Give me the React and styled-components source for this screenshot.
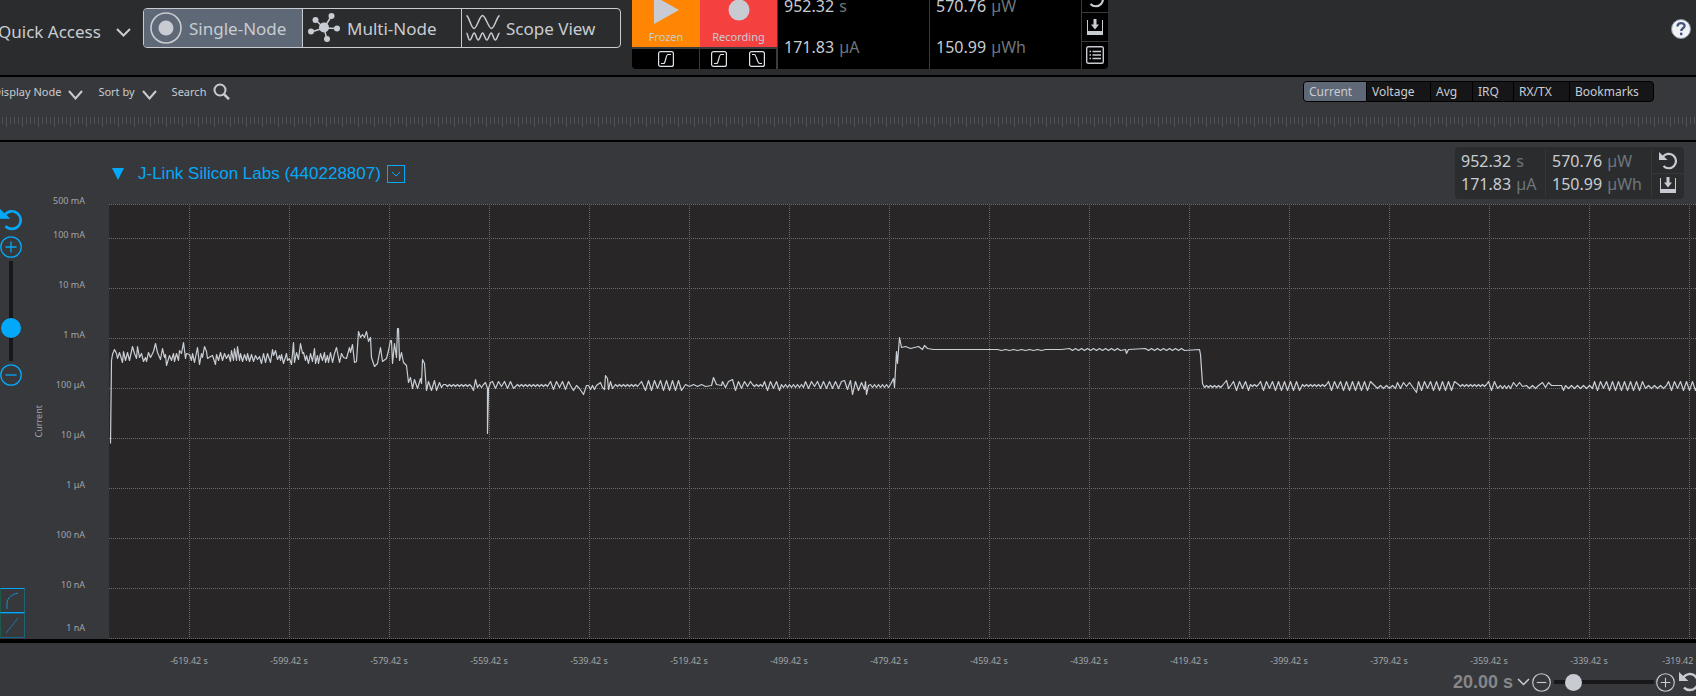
import React, { useState } from "react";
import styled, { createGlobalStyle, css } from "styled-components";

const c = {
  header: "#2b2c2e",
  panel: "#37383c",
  plot: "#282627",
  light: "#c8ccd2",
  dim: "#6d767c",
  axis: "#a2a5a8",
  grid: "#6c6c6c",
  cyan: "#03a9f8",
  active: "#5e6876",
};

const GlobalStyle = createGlobalStyle`
  *, *::before, *::after { box-sizing: border-box; }
  body {
    margin: 0;
    background: ${c.panel};
    color: ${c.light};
    font-family: "Noto Sans", "Open Sans", sans-serif;
    overflow: hidden;
  }
  button {
    margin: 0;
    padding: 0;
    border: 0;
    background: none;
    color: inherit;
    font: inherit;
    cursor: pointer;
  }
  svg { display: block; flex: none; }
`;

const Page = styled.div`
  display: flex;
  flex-direction: column;
  min-height: 100vh;
`;

/* ---------- header ---------- */
const Header = styled.header`
  display: flex;
  align-items: flex-start;
  height: 77px;
  background: ${c.header};
  border-bottom: 2px solid #000;
`;

const QuickAccess = styled.button`
  display: flex;
  align-items: center;
  justify-content: space-between;
  flex: none;
  width: 133px;
  height: 24px;
  margin: 20px 12px 0 -2px;
  font-size: 17px;
  line-height: 24px;
  white-space: nowrap;
`;

const ModeGroup = styled.nav`
  display: flex;
  flex: none;
  margin-top: 8px;
  height: 40px;
  border: 1px solid ${c.light};
  border-radius: 4px;
  overflow: hidden;
`;

const ModeButton = styled.button`
  display: flex;
  align-items: center;
  gap: 6px;
  width: 159px;
  padding-left: 5px;
  font-size: 17px;
  background: ${(p) => (p.$active ? c.active : "transparent")};
  &:first-child { width: 158px; }
  & + & {
    padding-left: 4px;
    border-left: 1px solid ${c.light};
  }
`;

const Meter = styled.section`
  display: flex;
  flex: none;
  height: 84px;
  margin: -15px 0 0 11px;
  background: #000;
  border-radius: 4px;
  overflow: hidden;
`;

const Recorder = styled.div`
  display: flex;
  flex-direction: column;
  width: ${(p) => p.$width}px;
`;

const RecordButton = styled.button`
  display: flex;
  flex-direction: column;
  align-items: center;
  justify-content: flex-end;
  gap: 6px;
  height: 62px;
  padding-bottom: 3px;
  background: ${(p) => p.$color};
  font-size: 11px;
  line-height: 14px;
`;

const Triggers = styled.div`
  display: flex;
  align-items: center;
  justify-content: center;
  gap: 22px;
  height: 22px;
  border-top: 2px solid #3a3b3d;
  border-right: 1px solid #3a3b3d;
`;

const Readings = styled.div`
  width: ${(p) => p.$width}px;
  padding: ${(p) => p.$pad};
  border-left: 1px solid ${(p) => p.$line};
  font-size: 16px;
  white-space: nowrap;
`;

const Reading = styled.div`
  height: ${(p) => p.$height}px;
  line-height: ${(p) => p.$height}px;
  span {
    margin-left: 1px;
    color: ${c.dim};
  }
`;

const ToolColumn = styled.div`
  display: flex;
  flex-direction: column;
  width: ${(p) => p.$width}px;
  border-left: 1px solid ${(p) => p.$line};
  button {
    display: flex;
    align-items: center;
    justify-content: center;
    flex: 1;
  }
  button + button { border-top: 1px solid ${(p) => p.$line}; }
`;

const HelpButton = styled.button`
  margin: 19px 5px 0 auto;
`;

/* ---------- toolbar ---------- */
const Toolbar = styled.section`
  height: 65px;
  border-bottom: 2px solid #000;
`;

const ToolbarRow = styled.div`
  display: flex;
  align-items: center;
  justify-content: space-between;
  height: 29px;
  padding-right: 42px;
`;

const Filters = styled.div`
  display: flex;
  gap: 15px;
  margin-left: -7px;
`;

const FilterButton = styled.button`
  display: flex;
  align-items: center;
  gap: 7px;
  font-size: 11px;
  line-height: 16px;
  white-space: nowrap;
  svg { margin-top: ${(p) => p.$drop || 0}px; }
`;

const Tabs = styled.div`
  display: flex;
  height: 21px;
  border: 1px solid #000;
  border-radius: 4px;
  overflow: hidden;
  background: #161618;
`;

const Tab = styled.button`
  width: ${(p) => p.$width}px;
  padding-left: 5px;
  text-align: left;
  font-size: 12px;
  line-height: 18px;
  white-space: nowrap;
  background: ${(p) => (p.$active ? c.active : "transparent")};
  & + & { border-left: 1px solid #000; }
`;

const Ruler = styled.div`
  height: 10px;
  margin-top: 11px;
  background:
    repeating-linear-gradient(90deg, transparent 0 6px, #4f5054 6px 7px, transparent 7px 16px) 0 0 / 100% 10px no-repeat,
    repeating-linear-gradient(90deg, transparent 0 2px, #4f5054 2px 3px, transparent 3px 4px) 0 0 / 100% 7px no-repeat;
`;

/* ---------- node panel ---------- */
const NodeHeader = styled.div`
  display: flex;
  align-items: flex-start;
  justify-content: space-between;
  height: 62px;
  padding: 5px 12px 0 112px;
`;

const NodeTitle = styled.div`
  display: flex;
  align-items: center;
  height: 54px;
  gap: 14px;
  color: ${c.cyan};
  h1 {
    margin: 0;
    font: 17px/20px "Liberation Sans", Arial, sans-serif;
    white-space: nowrap;
  }
  button { margin-left: -8px; }
`;

const NodeMeter = styled.section`
  display: flex;
  height: 52px;
  padding: 3px 0;
  background: ${c.header};
  border-radius: 4px;
  ${Readings}:first-child { border-left: 0; }
`;

const Chart = styled.main`
  display: flex;
  border-bottom: 4px solid #000;
  height: 439px;
`;

const Rail = styled.div`
  display: flex;
  flex-direction: column;
  align-items: flex-start;
  flex: none;
  width: 25px;
  padding-top: 5px;
  color: ${c.cyan};
`;

const RailButton = styled.button`
  margin: ${(p) => p.$margin};
`;

const ScaleButton = styled.button`
  display: flex;
  align-items: center;
  justify-content: center;
  width: 25px;
  height: 25px;
  border: 1px solid ${(p) => (p.$active ? c.cyan : "#14668f")};
  border-left-color: #1c5a4c;
  border-right-color: #1b6472;
  color: ${(p) => (p.$active ? "#1191d0" : "#1f75a2")};
`;

const ScaleGroup = styled.div`
  margin: auto 0 1px;
  display: flex;
  flex-direction: column;
`;

const thumb = css`
  -webkit-appearance: none;
  border: 0;
  border-radius: 50%;
  width: ${(p) => p.$thumb}px;
  height: ${(p) => p.$thumb}px;
  background: ${(p) => p.$color};
`;

const Slider = styled.input.attrs({ type: "range" })`
  -webkit-appearance: none;
  appearance: none;
  margin: 0;
  background: transparent;
  ${(p) =>
    p.$vertical
      ? css`
          writing-mode: vertical-lr;
          direction: rtl;
          width: 20px;
          height: 100px;
          margin: 2px 0 2px 1px;
        `
      : css`
          width: 100px;
          height: 20px;
          margin: 0 2px 0 3px;
        `}
  &::-webkit-slider-runnable-track {
    background: linear-gradient(#18181a, #18181a) center / ${(p) => (p.$vertical ? "4px 100%" : "100% 4px")} no-repeat;
  }
  &::-webkit-slider-thumb { ${thumb} }
`;

const AxisTitle = styled.div`
  display: flex;
  align-items: center;
  justify-content: center;
  flex: none;
  width: 28px;
  color: ${c.axis};
  font-size: 9px;
  line-height: 12px;
  span {
    writing-mode: vertical-rl;
    rotate: 180deg;
  }
`;

const AxisLabels = styled.div`
  flex: none;
  width: 56px;
  margin-top: -9px;
  padding-right: 24px;
  color: ${c.axis};
  font-size: 9px;
  line-height: 12px;
  text-align: right;
  white-space: nowrap;
`;

const AxisLabel = styled.div`
  height: ${(p) => p.$span}px;
`;

const Plot = styled.div`
  flex: 1;
  min-width: 0;
  background: ${c.plot};
  overflow: hidden;
`;

const TimeAxis = styled.div`
  display: flex;
  height: 28px;
  padding: 12px 0 0 139px;
  color: ${c.axis};
  font-size: 9px;
  line-height: 12px;
  overflow: hidden;
`;

const TimeLabel = styled.div`
  flex: none;
  width: 100px;
  text-align: center;
  &:last-child { width: 61px; text-align: right; }
`;

const ZoomBar = styled.footer`
  display: flex;
  align-items: center;
  justify-content: flex-end;
  height: 22px;
  margin-right: -3px;
`;

const Duration = styled.button`
  display: flex;
  align-items: center;
  gap: 4px;
  margin-right: 2px;
  color: #85878a;
  font: bold 18px/20px "Liberation Sans", Arial, sans-serif;
  svg { color: ${c.light}; }
`;

/* ---------- icons ---------- */
const Chevron = ({ w = 14, h = 9, stroke = 2 }) => (
  <svg width={w} height={h} viewBox={`0 0 ${w} ${h}`} fill="none" stroke="currentColor" strokeWidth={stroke}>
    <path d={`M1 1L${w / 2} ${h - 1.5}L${w - 1} 1`} />
  </svg>
);

const SingleIcon = () => (
  <svg width="34" height="34" viewBox="0 0 34 34" fill="none" stroke="currentColor" strokeWidth="1.6">
    <circle cx="17" cy="17" r="15" />
    <circle cx="17" cy="17" r="7.5" fill="currentColor" stroke="none" />
  </svg>
);

const MultiIcon = () => (
  <svg width="34" height="34" viewBox="0 0 34 34" fill="currentColor" stroke="currentColor" strokeWidth="1.5">
    <path d="M17 17L24.500 5M17 17L8.500 9M17 17L4 21M17 17L30 17.500M17 17L20 28.500" />
    <g stroke="none">
      <circle cx="17" cy="16.500" r="5" />
      <circle cx="24.500" cy="5" r="3" />
      <circle cx="8.500" cy="9" r="3" />
      <circle cx="4" cy="20.500" r="3" />
      <circle cx="30" cy="17.500" r="3" />
      <circle cx="20" cy="28" r="3" />
    </g>
  </svg>
);

const WavesIcon = () => (
  <svg width="34" height="34" viewBox="0 0 34 34" fill="none" stroke="currentColor" strokeWidth="1.500">
    <path d="M0.500 4.500C3.500 6 5 17.500 8 17.500S13.500 4.500 16.500 4.500S22.500 17.500 25.500 17.500S30.500 6 33.500 4.500" />
    <path d="M0.500 22C2 22.500 2 29 3.800 29S6.500 22 8.200 22S10.500 29 12.300 29S15 22 16.600 22S19 29 20.800 29S23.500 22 25.200 22S27.500 29 29.300 29S32 22.500 33.500 22" />
  </svg>
);

const PlayIcon = () => (
  <svg width="25" height="28" viewBox="0 0 25 28" fill={c.light}>
    <path d="M0 0L25 14L0 28Z" />
  </svg>
);

const RecordIcon = () => (
  <svg width="28" height="28" viewBox="0 0 28 28" fill={c.light}>
    <circle cx="14" cy="14" r="10.500" />
  </svg>
);

const EdgeIcon = ({ falling }) => (
  <svg width="16" height="16" viewBox="0 0 16 16" fill="none" stroke="#dfe3e8" strokeWidth="1.200">
    <rect x="0.600" y="0.600" width="14.800" height="14.800" rx="2" />
    <path d={falling ? "M3 3.500H5.500C7 3.500 8.500 12.500 10.500 12.500H13" : "M3 12.500H5.500C8 12.500 7.500 3.500 10 3.500H13"} />
  </svg>
);

const ResetIcon = ({ size = 18 }) => (
  <svg width={size} height={size} viewBox="0 0 18 18" fill="none" stroke="currentColor" strokeWidth="2.200">
    <path d="M3.800 5A7.200 7.200 0 1 1 4.500 14" />
    <path d="M0 0V8H8.500Z" fill="currentColor" stroke="none" />
  </svg>
);

const SaveIcon = () => (
  <svg width="18" height="16" viewBox="0 0 18 16" fill="currentColor">
    <path d="M1 1h1v11h14V1H17v15H1z" />
    <path d="M7.500 0h3v5.500h2.500L9 10.500L5 5.500h2.500z" />
  </svg>
);

const ListIcon = () => (
  <svg width="18" height="18" viewBox="0 0 18 18" fill="none" stroke="currentColor" strokeWidth="1.400">
    <rect x="0.700" y="0.700" width="16.600" height="16.600" rx="1.500" />
    <path d="M3.500 5.500H5M6.500 5.500H15M3.500 9H5M6.500 9H15M3.500 12.500H5M6.500 12.500H15" />
  </svg>
);

const SearchIcon = () => (
  <svg width="17" height="17" viewBox="0 0 17 17" fill="none" stroke="currentColor" strokeWidth="2">
    <circle cx="7" cy="7" r="5.500" />
    <path d="M10.800 11L16 16.200" strokeWidth="2.500" />
  </svg>
);

const HelpIcon = () => (
  <svg width="20" height="20" viewBox="0 0 20 20">
    <circle cx="10" cy="10" r="9.500" fill="#f1f2f4" stroke="#8a93a5" />
    <path d="M6.500 7.500C6.500 3 13.800 3.200 13.600 7C13.500 9.200 10.200 9.400 10.200 12" fill="none" stroke="#43537a" strokeWidth="2.300" />
    <circle cx="10.200" cy="15" r="1.400" fill="#43537a" />
  </svg>
);

const ZoomIcon = ({ size, plus }) => (
  <svg width={size} height={size} viewBox="0 0 22 22" fill="none" stroke="currentColor" strokeWidth="1.300">
    <circle cx="11" cy="11" r="10.200" />
    <path d={plus ? "M5.500 11H16.500M11 5.500V16.500" : "M5.500 11H16.500"} />
  </svg>
);

/* ---------- trace data ---------- */
const START = [
  1, 239, 2, 156, 3, 150, 5, 145, 7, 149, 8, 154, 10, 148, 13, 158, 14, 147, 16, 156, 18, 148, 20, 156, 23, 142,
  25, 149, 27, 154, 28, 142, 30, 153, 32, 149, 34, 157, 36, 153, 37, 157, 39, 148, 41, 153, 44, 147, 46, 139, 48, 148,
  51, 155, 53, 144, 55, 153, 56, 150, 57, 161, 60, 151, 62, 156, 64, 149, 65, 157, 67, 149, 69, 156, 70, 146, 72, 149,
  74, 138, 76, 154, 77, 149, 80, 150, 82, 156, 83, 149, 85, 158, 88, 143, 90, 160, 92, 149, 93, 153, 95, 142, 97, 147,
  98, 154, 101, 152, 103, 151, 106, 160, 107, 150, 109, 156, 111, 148, 113, 156, 115, 149, 117, 154, 119, 150, 121, 157,
  122, 146, 124, 156, 125, 144, 127, 156, 128, 142, 130, 156, 131, 149, 133, 157, 135, 150, 137, 156, 138, 149, 140, 157,
  142, 150, 144, 157, 146, 151, 148, 155, 150, 152, 152, 159, 154, 149, 156, 158, 158, 149, 161, 158, 163, 145, 164, 151,
  166, 146, 168, 155, 170, 151, 171, 156, 172, 150, 174, 159, 177, 149, 178, 156, 180, 154, 182, 160, 184, 138, 185, 158,
  187, 148, 189, 155, 191, 139, 193, 149, 194, 148, 196, 156, 197, 151, 199, 159, 201, 149, 203, 157, 205, 144, 206, 159,
  208, 151, 209, 159, 211, 149, 213, 156, 215, 148, 216, 158, 218, 151, 219, 158, 221, 148, 223, 158, 225, 149, 227, 143,
  230, 158, 232, 149, 234, 153, 237, 154, 240, 143, 241, 148, 243, 140, 245, 158, 247, 157, 249, 127, 251, 133, 253, 130,
  255, 133, 257, 127, 259, 137, 261, 133, 262, 153, 265, 162, 268, 159, 271, 143, 273, 157, 277, 154, 279, 146, 281, 136,
  282, 136, 283, 159, 285, 139, 287, 153, 288, 124, 289, 124, 290, 156, 292, 148, 294, 158, 297, 161, 299, 178, 301, 173,
  303, 184, 305, 175, 308, 184, 311, 174, 312, 179, 313, 155, 315, 159, 317, 186, 319, 177, 322, 186, 325, 176, 327, 186,
  330, 178, 332, 183, 334, 180,
];

const zigzag = (from, to, step, high, low) => {
  const out = [];
  for (let x = from, i = 0; x < to; x += step, i += 1) {
    const soften = i % 7 === 3 ? 2 : 0;
    out.push(x, i % 2 ? low - (low - high > 4 ? soften : 0) : high);
  }
  return out;
};

const TRACE = [
  ...START,
  ...zigzag(336, 364, 2, 180, 182), 364, 186, 366, 175, 368, 183,
  ...zigzag(370, 376, 2, 180, 183), 376, 178, 378, 184, 378, 229, 379, 184, 381, 178,
  ...zigzag(383, 407, 3, 177, 184), ...zigzag(408, 440, 2, 180, 182),
  ...zigzag(441, 460, 3, 177, 185), ...zigzag(461, 473, 3, 181, 186), 474, 190, 477, 181,
  ...zigzag(479, 488, 2, 181, 185), 491, 178, 493, 183, 495, 185, 496, 171, 498, 174, 499, 185, 501, 177, 503, 184,
  ...zigzag(506, 530, 2, 180, 182), 532, 177, 536, 186, ...zigzag(539, 575, 3, 176, 186),
  ...zigzag(576, 600, 4, 180, 182), 602, 181, 604, 173, 607, 180, 612, 181,
  ...zigzag(613, 622, 3, 177, 183), 623, 175, 626, 186, ...zigzag(629, 642, 3, 177, 184),
  ...zigzag(643, 654, 2, 180, 182), ...zigzag(655, 671, 3, 177, 186),
  ...zigzag(672, 695, 2, 180, 183), ...zigzag(696, 734, 3, 177, 184),
  ...zigzag(735, 742, 3, 176, 185), 743, 190, 746, 177, 749, 186, 752, 178, 755, 185, 756, 177, 757, 190, 759, 181,
  ...zigzag(761, 782, 2, 180, 183), 784, 174, 785, 183, 787, 147, 788, 159, 790, 133, 792, 143, 796, 142, 801, 144,
  809, 142, 813, 145, 815, 141, 818, 144, 824, 145, 885, 145,
  ...zigzag(888, 940, 4, 145, 146), 952, 145, ...zigzag(960, 1014, 3, 144, 146), 1016, 145, 1017, 149, 1019, 145,
  ...zigzag(1036, 1078, 3, 144, 146), 1090, 145, 1091, 150, 1093, 179, 1095, 183,
  ...zigzag(1097, 1115, 2, 181, 183), 1117, 176, 1119, 184, 1122, 180,
  ...zigzag(1124, 1140, 3, 177, 186), ...zigzag(1141, 1150, 2, 180, 182),
  ...zigzag(1151, 1192, 3, 177, 186), ...zigzag(1193, 1218, 2, 180, 182),
  ...zigzag(1219, 1264, 3, 177, 186), ...zigzag(1265, 1287, 3, 181, 184),
  ...zigzag(1288, 1303, 3, 178, 184), 1307, 188, ...zigzag(1309, 1348, 3, 177, 186),
  ...zigzag(1349, 1378, 2, 180, 182), ...zigzag(1379, 1390, 3, 177, 186),
  ...zigzag(1391, 1403, 2, 181, 184), ...zigzag(1404, 1416, 3, 178, 182),
  ...zigzag(1417, 1432, 3, 181, 184), ...zigzag(1433, 1444, 3, 178, 183), 1452, 181, 1454, 186,
  ...zigzag(1456, 1484, 3, 181, 184), ...zigzag(1485, 1538, 3, 177, 186),
  ...zigzag(1539, 1558, 3, 181, 184), ...zigzag(1559, 2400, 3, 177, 186),
];

const points = TRACE.reduce((s, v, i) => s + v + (i % 2 ? " " : ","), "");

const LEVELS = [
  ["500 mA", 34], ["100 mA", 50], ["10 mA", 50], ["1 mA", 50], ["100 µA", 50],
  ["10 µA", 50], ["1 µA", 50], ["100 nA", 50], ["10 nA", 43], ["1 nA", 12],
];
const GRID_Y = [0, 34, 84, 134, 184, 234, 284, 334, 384, 434];
const GRID_X = Array.from({ length: 24 }, (_, i) => 80 + i * 100);
const TIMES = Array.from({ length: 16 }, (_, i) => `-${(619.42 - i * 20).toFixed(2)} s`);
const TABS = [["Current", 62], ["Voltage", 64], ["Avg", 42], ["IRQ", 41], ["RX/TX", 56], ["Bookmarks", 84]];
const MODES = [["Single-Node", SingleIcon], ["Multi-Node", MultiIcon], ["Scope View", WavesIcon]];

const ReadingPair = ({ rows, height, ...rest }) => (
  <Readings {...rest}>
    {rows.map(([value, unit]) => (
      <Reading key={unit} $height={height}>
        {value} <span>{unit}</span>
      </Reading>
    ))}
  </Readings>
);

const CHARGE = [["952.32", "s"], ["171.83", "µA"]];
const ENERGY = [["570.76", "µW"], ["150.99", "µWh"]];

export default function App() {
  const [mode, setMode] = useState("Single-Node");
  const [tab, setTab] = useState("Current");
  const [log, setLog] = useState(true);

  return (
    <Page>
      <GlobalStyle />
      <Header>
        <QuickAccess>
          Quick Access
          <Chevron w={15} h={9} />
        </QuickAccess>
        <ModeGroup aria-label="View mode">
          {MODES.map(([name, Icon]) => (
            <ModeButton key={name} $active={mode === name} onClick={() => setMode(name)}>
              <Icon />
              {name}
            </ModeButton>
          ))}
        </ModeGroup>
        <Meter>
          <Recorder $width={68}>
            <RecordButton $color="#ff8503">
              <PlayIcon />
              Frozen
            </RecordButton>
            <Triggers>
              <button aria-label="Start on rising edge"><EdgeIcon /></button>
            </Triggers>
          </Recorder>
          <Recorder $width={77}>
            <RecordButton $color="#f54040">
              <RecordIcon />
              Recording
            </RecordButton>
            <Triggers>
              <button aria-label="Record on rising edge"><EdgeIcon /></button>
              <button aria-label="Record on falling edge"><EdgeIcon falling /></button>
            </Triggers>
          </Recorder>
          <ReadingPair rows={CHARGE} height={41} $width={152} $pad="1px 0 0 6px" $line="#3a3b3d" />
          <ReadingPair rows={ENERGY} height={41} $width={152} $pad="1px 0 0 6px" $line="#3a3b3d" />
          <ToolColumn $width={27} $line="#3a3b3d">
            <button aria-label="Reset"><ResetIcon /></button>
            <button aria-label="Save"><SaveIcon /></button>
            <button aria-label="List"><ListIcon /></button>
          </ToolColumn>
        </Meter>
        <HelpButton aria-label="Help"><HelpIcon /></HelpButton>
      </Header>

      <Toolbar>
        <ToolbarRow>
          <Filters>
            <FilterButton $drop={6}>Display Node <Chevron w={15} h={10} /></FilterButton>
            <FilterButton $drop={6}>Sort by <Chevron w={15} h={10} /></FilterButton>
            <FilterButton>Search <SearchIcon /></FilterButton>
          </Filters>
          <Tabs role="tablist">
            {TABS.map(([name, width]) => (
              <Tab key={name} role="tab" aria-selected={tab === name} $width={width} $active={tab === name} onClick={() => setTab(name)}>
                {name}
              </Tab>
            ))}
          </Tabs>
        </ToolbarRow>
        <Ruler />
      </Toolbar>

      <NodeHeader>
        <NodeTitle>
          <svg width="12" height="12" viewBox="0 0 12 12" fill="currentColor"><path d="M0 0H12L6 12Z" /></svg>
          <h1>J-Link Silicon Labs (440228807)</h1>
          <button aria-label="Node options">
            <svg width="18" height="18" viewBox="0 0 18 18" fill="none" stroke="currentColor">
              <rect x="0.500" y="0.500" width="17" height="17" />
              <path d="M5 7L9 11L13 7" />
            </svg>
          </button>
        </NodeTitle>
        <NodeMeter>
          <ReadingPair rows={CHARGE} height={23} $width={90} $pad="0 0 0 6px" $line={c.panel} />
          <ReadingPair rows={ENERGY} height={23} $width={106} $pad="0 0 0 6px" $line={c.panel} />
          <ToolColumn $width={33} $line={c.panel}>
            <button aria-label="Reset node"><ResetIcon /></button>
            <button aria-label="Save node"><SaveIcon /></button>
          </ToolColumn>
        </NodeMeter>
      </NodeHeader>

      <Chart>
        <Rail>
          <RailButton $margin="0 0 5px" aria-label="Reset scale"><ResetIcon size={22} /></RailButton>
          <RailButton $margin="0 0 1px" aria-label="Zoom in vertically"><ZoomIcon size={22} plus /></RailButton>
          <Slider aria-label="Vertical zoom" $vertical $thumb={20} $color={c.cyan} defaultValue={29} />
          <RailButton $margin="1px 0 0" aria-label="Zoom out vertically"><ZoomIcon size={22} /></RailButton>
          <ScaleGroup>
            <ScaleButton $active={log} aria-label="Logarithmic scale" onClick={() => setLog(true)}>
              <svg width="13" height="17" viewBox="0 0 13 17" fill="none" stroke="currentColor"><path d="M1 17V11C2 5 5 3 12 1" /></svg>
            </ScaleButton>
            <ScaleButton $active={!log} aria-label="Linear scale" onClick={() => setLog(false)}>
              <svg width="13" height="17" viewBox="0 0 13 17" fill="none" stroke="currentColor"><path d="M0 16L12 1" /></svg>
            </ScaleButton>
          </ScaleGroup>
        </Rail>
        <AxisTitle><span>Current</span></AxisTitle>
        <AxisLabels>
          {LEVELS.map(([name, span]) => <AxisLabel key={name} $span={span}>{name}</AxisLabel>)}
        </AxisLabels>
        <Plot>
          <svg width="100%" height="435" role="img" aria-label="Current over time">
            <g stroke={c.grid} strokeDasharray="1 1" shapeRendering="crispEdges">
              {GRID_Y.map((y) => <line key={y} x1="0" x2="100%" y1={y + 0.5} y2={y + 0.5} />)}
              {GRID_X.map((x) => <line key={x} x1={x + 0.5} x2={x + 0.5} y1="0" y2="435" />)}
            </g>
            <polyline points={points} transform="translate(0.5 0.5)" fill="none" stroke="#c9ced4" strokeWidth="1.2" strokeLinejoin="round" />
          </svg>
        </Plot>
      </Chart>

      <TimeAxis>
        {TIMES.map((t) => <TimeLabel key={t}>{t}</TimeLabel>)}
      </TimeAxis>
      <ZoomBar>
        <Duration>20.00 s <Chevron w={13} h={8} stroke={1.5} /></Duration>
        <button aria-label="Zoom out"><ZoomIcon size={19} /></button>
        <Slider aria-label="Time zoom" $thumb={17} $color={c.light} defaultValue={13} />
        <button aria-label="Zoom in"><ZoomIcon size={19} plus /></button>
        <RailButton $margin="0 0 0 4px" aria-label="Reset time"><ResetIcon size={20} /></RailButton>
      </ZoomBar>
    </Page>
  );
}
